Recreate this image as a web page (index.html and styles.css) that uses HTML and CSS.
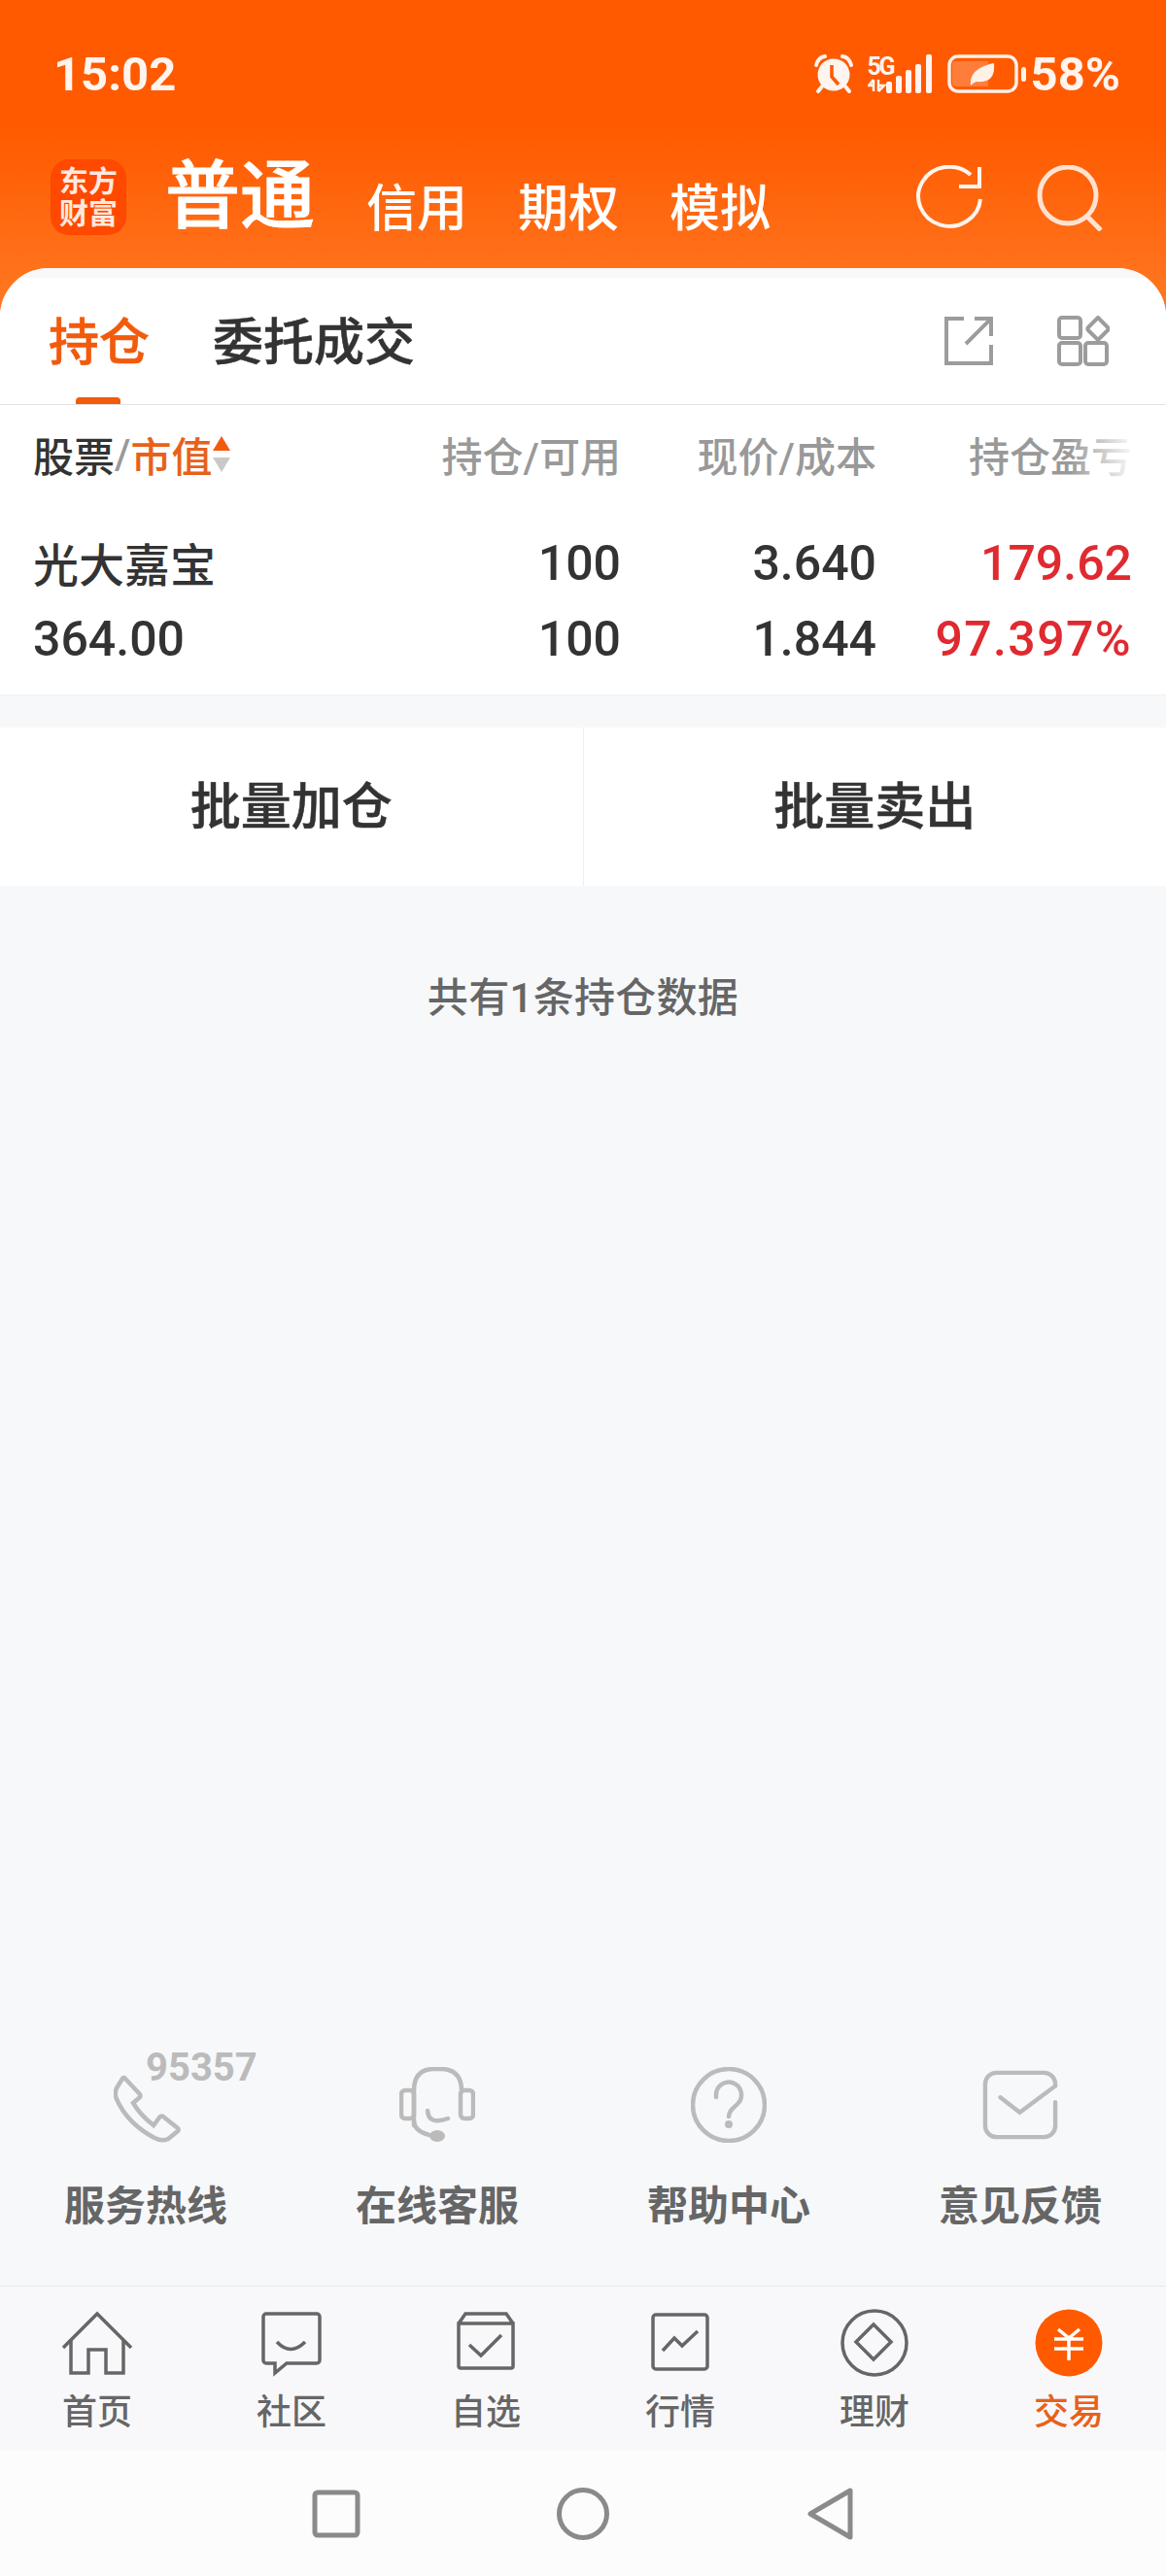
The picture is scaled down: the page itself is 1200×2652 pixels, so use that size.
FILE: index.html
```html
<!DOCTYPE html>
<html lang="zh-CN">
  <head>
    <meta charset="utf-8">
    <title>交易</title>
    <link rel="stylesheet" href="styles.css">
  </head>
  <body>
    <div id="screen">
      <header id="hero">
        <div id="statusbar">
          <span id="clock">15:02</span>
          <div id="status-icons">
            <svg class="alarm" width="40" height="40" viewBox="0 0 40 40">
              <path class="bell" d="M2 11 Q4 3 11 2 M38 11 Q36 3 29 2"/>
              <path class="bell" d="M8 33 L4 38 M32 33 L36 38"/>
              <circle cx="20" cy="21" r="16.5" fill="#fff4ee"/>
              <path class="hand" d="M18 11 V23 L25 31"/>
            </svg>
            <div class="net">
              <span class="net-label">5G</span>
              <svg width="20" height="14" viewBox="0 0 20 14">
                <path class="arrows" d="M6 1 V13 M6 1 L1 7 H5 M11 1 V13 M11 13 L17 7 H12"/>
              </svg>
            </div>
            <svg class="bars" width="48" height="40" viewBox="0 0 48 40">
              <rect x="0" y="28" width="6" height="12" rx="2"/>
              <rect x="10" y="22" width="6" height="18" rx="2"/>
              <rect x="20" y="16" width="6" height="24" rx="2"/>
              <rect x="30" y="10" width="6" height="30" rx="2"/>
              <rect x="41" y="0" width="6" height="40" rx="2"/>
            </svg>
            <svg class="battery" width="82" height="40" viewBox="0 0 82 40">
              <rect x="2" y="2" width="69" height="36" rx="9" fill="none" stroke="#fff1e8" stroke-width="3.5"/>
              <path d="M8 7 H42 V33 H8 a3 3 0 0 1 -3 -3 V10 a3 3 0 0 1 3 -3 Z" fill="#ff7d3b"/>
              <path d="M24 32 Q22 14 48 9 Q50 30 30 28 Q27 29 24 32 Z" fill="#fff1e8"/>
              <rect x="76" y="13" width="5" height="15" rx="2.5" fill="#fff1e8"/>
            </svg>
            <span id="battery-level">58%</span>
          </div>
        </div>
        <nav id="account-nav">
          <div id="logo">
            <span>东方</span>
            <span>财富</span>
          </div>
          <a class="account account-main">普通</a>
          <a class="account">信用</a>
          <a class="account">期权</a>
          <a class="account">模拟</a>
          <div id="hero-actions">
            <svg width="68" height="66" viewBox="0 0 68 66">
              <path class="hero-line" d="M66 35 A32 30.5 0 1 1 56 10"/>
              <path class="hero-line" d="M65 2 V22 H44"/>
            </svg>
            <svg width="68" height="68" viewBox="0 0 68 68">
              <circle class="hero-line pale" cx="32" cy="31" r="29"/>
              <path class="hero-line pale" d="M52 53 L66 67"/>
            </svg>
          </div>
        </nav>
      </header>

      <main id="sheet">
        <div id="tabs">
          <a class="tab active">持仓</a>
          <a class="tab">委托成交</a>
          <div id="tab-tools">
            <svg width="50" height="50" viewBox="0 0 50 50">
              <path class="tool" d="M20 2 H2 V48 H48 V29"/>
              <path class="tool" d="M31 2 H48 V20 M48 2 L22 28"/>
            </svg>
            <svg width="54" height="52" viewBox="0 0 54 52">
              <rect class="tool" x="2" y="2" width="22" height="21" rx="3"/>
              <rect class="tool" x="2" y="28" width="22" height="22" rx="3"/>
              <rect class="tool" x="29" y="28" width="22" height="22" rx="3"/>
              <path class="tool" d="M42 2 L52 12 a2 2 0 0 1 0 3 L42 25 L32 15 a2 2 0 0 1 0 -3 Z"/>
            </svg>
          </div>
        </div>

        <section id="positions">
          <div class="row head">
            <div class="cell-name">
              <span>股票</span><span class="slash">/</span><span class="sorted">市值</span>
              <span class="sort-arrows"><i class="up"></i><i class="down"></i></span>
            </div>
            <div>持仓/可用</div>
            <div>现价/成本</div>
            <div class="faded">持仓盈亏</div>
          </div>
          <div class="row stock">
            <div class="cell-name stock-name">光大嘉宝</div>
            <div>100</div>
            <div>3.640</div>
            <div class="up-red">179.62</div>
          </div>
          <div class="row stock">
            <div class="cell-name">364.00</div>
            <div>100</div>
            <div>1.844</div>
            <div class="up-red percent">97.397%</div>
          </div>
        </section>

        <div id="batch">
          <button>批量加仓</button>
          <button>批量卖出</button>
        </div>

        <p id="count">共有1条持仓数据</p>

        <div id="services">
          <a class="service">
            <span class="hotline">95357</span>
            <svg class="phone" width="70" height="70" viewBox="0 0 70 70">
              <path class="svc" d="M11 3 L27 20 a3 3 0 0 1 0 3 L20 29 Q27 41 41 52 L47 44 a3 3 0 0 1 4 -1 L66 55 a2 2 0 0 1 0 3 L56 66 Q50 69 42 65 Q14 50 3 25 Q0 18 4 12 L9 4 a1.5 1.5 0 0 1 2 -1 Z"/>
            </svg>
            <span class="service-label">服务热线</span>
          </a>
          <a class="service">
            <svg width="78" height="78" viewBox="0 0 78 78">
              <path class="svc" d="M15 60 V24 Q15 2 36 2 H42 Q64 2 64 24"/>
              <path class="svc" d="M15 56 Q16 68 36 71"/>
              <rect class="svc" x="2" y="24" width="13" height="29" rx="4"/>
              <rect class="svc" x="63" y="24" width="13" height="29" rx="4"/>
              <path class="svc" d="M29 45 Q30 60 50 53"/>
              <ellipse cx="39" cy="71" rx="8" ry="6" fill="#bbb"/>
            </svg>
            <span class="service-label">在线客服</span>
          </a>
          <a class="service">
            <svg width="78" height="78" viewBox="0 0 78 78">
              <circle class="svc" cx="39" cy="39" r="37"/>
              <path class="svc" d="M26 31 V29 a13 13 0 1 1 22 9 c-4 4 -9 7 -9 13"/>
              <circle cx="39" cy="59" r="4" fill="#bbb"/>
            </svg>
            <span class="service-label">帮助中心</span>
          </a>
          <a class="service">
            <svg width="78" height="78" viewBox="-1 -3 80 78">
              <path class="svc" d="M76 33 V58 a12 12 0 0 1 -12 12 H14 a12 12 0 0 1 -12 -12 V14 a12 12 0 0 1 12 -12 H64 a12 12 0 0 1 12 12 V16 L38.5 44 L18 28"/>
            </svg>
            <span class="service-label">意见反馈</span>
          </a>
        </div>

        <nav id="tabbar">
          <a class="tabbar-item">
            <svg width="72" height="72" viewBox="0 -4 72 72">
              <path class="bar-line" d="M1 36 L36 1 L71 36"/>
              <path class="bar-line" d="M9 28 V62 H27 V38 H45 V62 H63 V28"/>
            </svg>
            首页
          </a>
          <a class="tabbar-item">
            <svg width="62" height="72" viewBox="0 -3 62 72">
              <path class="bar-line" d="M5 2 H57 a3 3 0 0 1 3 3 V50 a3 3 0 0 1 -3 3 H26 L14 63 V53 H5 a3 3 0 0 1 -3 -3 V5 a3 3 0 0 1 3 -3 Z"/>
              <path class="bar-line" d="M16 31 Q30 46 45 31"/>
            </svg>
            社区
          </a>
          <a class="tabbar-item">
            <svg width="60" height="72" viewBox="0 -4 60 72">
              <path class="bar-line" d="M2 11 H58 V55 a2 2 0 0 1 -2 2 H4 a2 2 0 0 1 -2 -2 Z M2 11 L9 1 H51 L58 11"/>
              <path class="bar-line" d="M13 33 L25 44 L46 23"/>
            </svg>
            自选
          </a>
          <a class="tabbar-item">
            <svg width="60" height="72" viewBox="0 -4 60 72">
              <rect class="bar-line" x="2" y="2" width="56" height="56" rx="3"/>
              <path class="bar-line" d="M12 39 L24 26 L32 34 L48 19"/>
            </svg>
            行情
          </a>
          <a class="tabbar-item">
            <svg width="70" height="72" viewBox="0 0 70 72">
              <circle class="bar-line" cx="35" cy="35" r="33"/>
              <path class="bar-line" d="M34 16 L52 34 L34 52 L16 34 Z"/>
            </svg>
            理财
          </a>
          <a class="tabbar-item active">
            <svg width="70" height="72" viewBox="0 0 70 72">
              <circle cx="35" cy="35" r="34.5" fill="#ff5a00"/>
              <path class="yen" d="M24 21 L35 30 L46 21 M20 31 H50 M20 41 H50 M35 30 V53"/>
            </svg>
            交易
          </a>
        </nav>
      </main>

      <div id="softkeys">
        <svg width="50" height="50" viewBox="0 0 50 50"><rect class="key" x="3" y="3" width="44" height="44" rx="3"/></svg>
        <svg width="54" height="56" viewBox="0 0 54 56"><circle class="key" cx="27" cy="28" r="24.5"/></svg>
        <svg class="back-key" width="48" height="56" viewBox="0 0 48 56"><path class="key" d="M44 4 V52 L3 28 Z"/></svg>
      </div>
    </div>
  </body>
</html>
```

FILE: styles.css
```css
* {
  box-sizing: border-box;
}

body {
  margin: 0;
  background: #f7f8fa;
  font-family: Roboto, "Noto Sans CJK SC", sans-serif;
  color: #333;
}

a {
  display: block;
}

svg {
  display: block;
  flex: none;
}

#screen {
  display: flex;
  flex-direction: column;
  width: 1200px;
  height: 2652px;
  overflow: hidden;
}

/* orange top area */
#hero {
  height: 326px;
  flex: none;
  color: #fff;
  background: linear-gradient(#ff5a00 0, #ff5a00 130px, #ff751f 300px);
}

#statusbar {
  display: flex;
  justify-content: space-between;
  align-items: center;
  height: 152px;
  padding: 0 47px 0 55px;
}

#clock {
  font-size: 49px;
  font-weight: 700;
  color: #fff4ee;
}

#status-icons {
  display: flex;
  align-items: center;
  color: #fff4ee;
}

.bell {
  fill: none;
  stroke: #fff4ee;
  stroke-width: 4;
  stroke-linecap: round;
}

.hand {
  fill: none;
  stroke: #ff5a00;
  stroke-width: 3.5;
}

.net {
  display: flex;
  flex-direction: column;
  width: 27px;
  height: 40px;
  margin-left: 15px;
}

.net-label {
  font-size: 25px;
  font-weight: 700;
  line-height: 25px;
  letter-spacing: -2.5px;
}

.arrows {
  fill: none;
  stroke: #fff4ee;
  stroke-width: 2.5;
}

.bars {
  margin-left: -8px;
  fill: #fff4ee;
}

.battery {
  margin-left: 15px;
}

#battery-level {
  margin-left: 4px;
  font-size: 49px;
  font-weight: 700;
}

#account-nav {
  display: flex;
  align-items: flex-start;
  height: 124px;
  padding: 0 65px 0 52px;
}

#logo {
  display: flex;
  flex-direction: column;
  align-items: center;
  justify-content: center;
  width: 78px;
  height: 78px;
  margin: 12px 40px 0 0;
  border-radius: 19px;
  background: #ff4800;
  font-size: 30px;
  font-weight: 700;
  line-height: 33px;
  color: #ffe9df;
}

.account {
  margin: 34px 52px 0 0;
  font-size: 52px;
  font-weight: 500;
  line-height: 60px;
}

.account-main {
  margin: 6px 53px 0 0;
  font-size: 77px;
  line-height: 90px;
  -webkit-text-stroke: 0.8px #fff;
}

#hero-actions {
  display: flex;
  align-items: flex-start;
  gap: 56px;
  margin: 18px 0 0 auto;
}

.hero-line {
  fill: none;
  stroke: #fff4ee;
  stroke-width: 4;
}

.pale {
  stroke: #ffe2d2;
  stroke-width: 5;
}

/* white sheet under the orange area */
#sheet {
  display: flex;
  flex-direction: column;
  flex: 1;
  margin-top: -50px;
  border-radius: 50px 50px 0 0;
  background: #f7f8fa;
  overflow: hidden;
}

#tabs {
  display: flex;
  align-items: center;
  height: 141px;
  padding: 10px 58px 0 50px;
  background: linear-gradient(#f7f8fa 10px, #fff 10px);
  border-bottom: 1px solid #e4e4e6;
}

.tab {
  position: relative;
  margin-right: 65px;
  padding-top: 6px;
  font-size: 52px;
  font-weight: 500;
  line-height: 124px;
  -webkit-text-stroke: 0.5px currentColor;
}

.tab.active {
  color: #f25a0c;
}

.tab.active::after {
  content: "";
  position: absolute;
  left: 28px;
  bottom: 0;
  width: 46px;
  height: 7px;
  border-radius: 4px 4px 0 0;
  background: #f25a0c;
}

#tab-tools {
  display: flex;
  align-items: center;
  gap: 66px;
  margin-left: auto;
}

.tool {
  fill: none;
  stroke: #9c9c9c;
  stroke-width: 4;
}

#positions {
  padding-bottom: 18px;
  background: #fff;
  border-bottom: 1px solid #eeeff2;
}

.row {
  display: grid;
  grid-template-columns: 335px 270px 263px 263px;
  padding: 0 35px 0 34px;
  text-align: right;
}

.cell-name {
  text-align: left;
}

.row.head {
  align-items: center;
  height: 100px;
  margin-bottom: 24px;
  font-size: 42px;
  font-weight: 500;
  color: #999;
}

.row.head .cell-name {
  display: flex;
  align-items: center;
  color: #333;
}

.slash {
  color: #999;
}

.sorted {
  color: #e8611a;
}

.sort-arrows {
  display: flex;
  flex-direction: column;
  gap: 7px;
  margin-left: 1px;
}

.sort-arrows i {
  display: block;
  width: 0;
  height: 0;
  border-left: 9px solid transparent;
  border-right: 9px solid transparent;
}

.sort-arrows .up {
  border-bottom: 15px solid #f25a0c;
}

.sort-arrows .down {
  border-top: 15px solid #c9c9c9;
}

.faded {
  position: relative;
}

.faded::after {
  content: "";
  position: absolute;
  top: 0;
  bottom: 0;
  right: -35px;
  width: 100px;
  background: linear-gradient(to right, rgba(255, 255, 255, 0), #fff 70%);
}

.row.stock {
  align-items: center;
  height: 78px;
  font-size: 50px;
  font-weight: 500;
  color: #333;
}

.stock-name {
  margin-bottom: 4px;
  font-size: 47px;
}

.up-red {
  color: #df2a30;
}

.percent {
  letter-spacing: 1.4px;
}

#batch {
  display: flex;
  flex: none;
  height: 163px;
  margin-top: 33px;
  background: #fff;
}

#batch button {
  all: unset;
  flex: 1;
  padding-bottom: 8px;
  font-size: 52px;
  font-weight: 500;
  text-align: center;
  color: #333;
  -webkit-text-stroke: 0.5px #333;
}

#batch button:first-child {
  border-right: 1px solid #eeeff2;
}

#count {
  margin: 0;
  padding-top: 87px;
  font-size: 42px;
  font-weight: 500;
  line-height: 57px;
  letter-spacing: 0.3px;
  text-align: center;
  color: #666;
}

/* service shortcuts at the bottom */
#services {
  display: grid;
  grid-template-columns: repeat(4, 300px);
  margin-top: auto;
  padding-bottom: 55px;
  border-bottom: 1px solid #e8e9ec;
}

.service {
  position: relative;
  display: flex;
  flex-direction: column;
  align-items: center;
  justify-content: flex-end;
}

.service-label {
  margin-top: 40px;
  font-size: 42px;
  font-weight: 700;
  line-height: 52px;
  color: #666;
}

.phone {
  transform: translateX(2px);
}

.hotline {
  position: absolute;
  top: -19px;
  left: 150px;
  font-size: 40px;
  font-weight: 700;
  line-height: 40px;
  color: #bbb;
}

.svc {
  fill: none;
  stroke: #bbb;
  stroke-width: 4.5;
  stroke-linecap: round;
}

#tabbar {
  display: grid;
  grid-template-columns: repeat(6, 200px);
  flex: none;
  height: 169px;
  padding-top: 23px;
  background: #f8f8fa;
}

.tabbar-item {
  display: flex;
  flex-direction: column;
  align-items: center;
  font-size: 36px;
  font-weight: 500;
  line-height: 50px;
  color: #666;
}

.tabbar-item svg {
  margin-bottom: 10px;
}

.tabbar-item.active {
  color: #e8611a;
}

.bar-line {
  fill: none;
  stroke: #666;
  stroke-width: 3.5;
}

.yen {
  fill: none;
  stroke: #fff;
  stroke-width: 3.5;
}

#softkeys {
  display: flex;
  align-items: center;
  flex: none;
  justify-content: center;
  height: 129px;
  gap: 202px;
  background: #fcfcfc;
}

.back-key {
  margin-left: 2px;
}

.key {
  fill: none;
  stroke: #8a8a8a;
  stroke-width: 5;
  stroke-linejoin: round;
}
```
